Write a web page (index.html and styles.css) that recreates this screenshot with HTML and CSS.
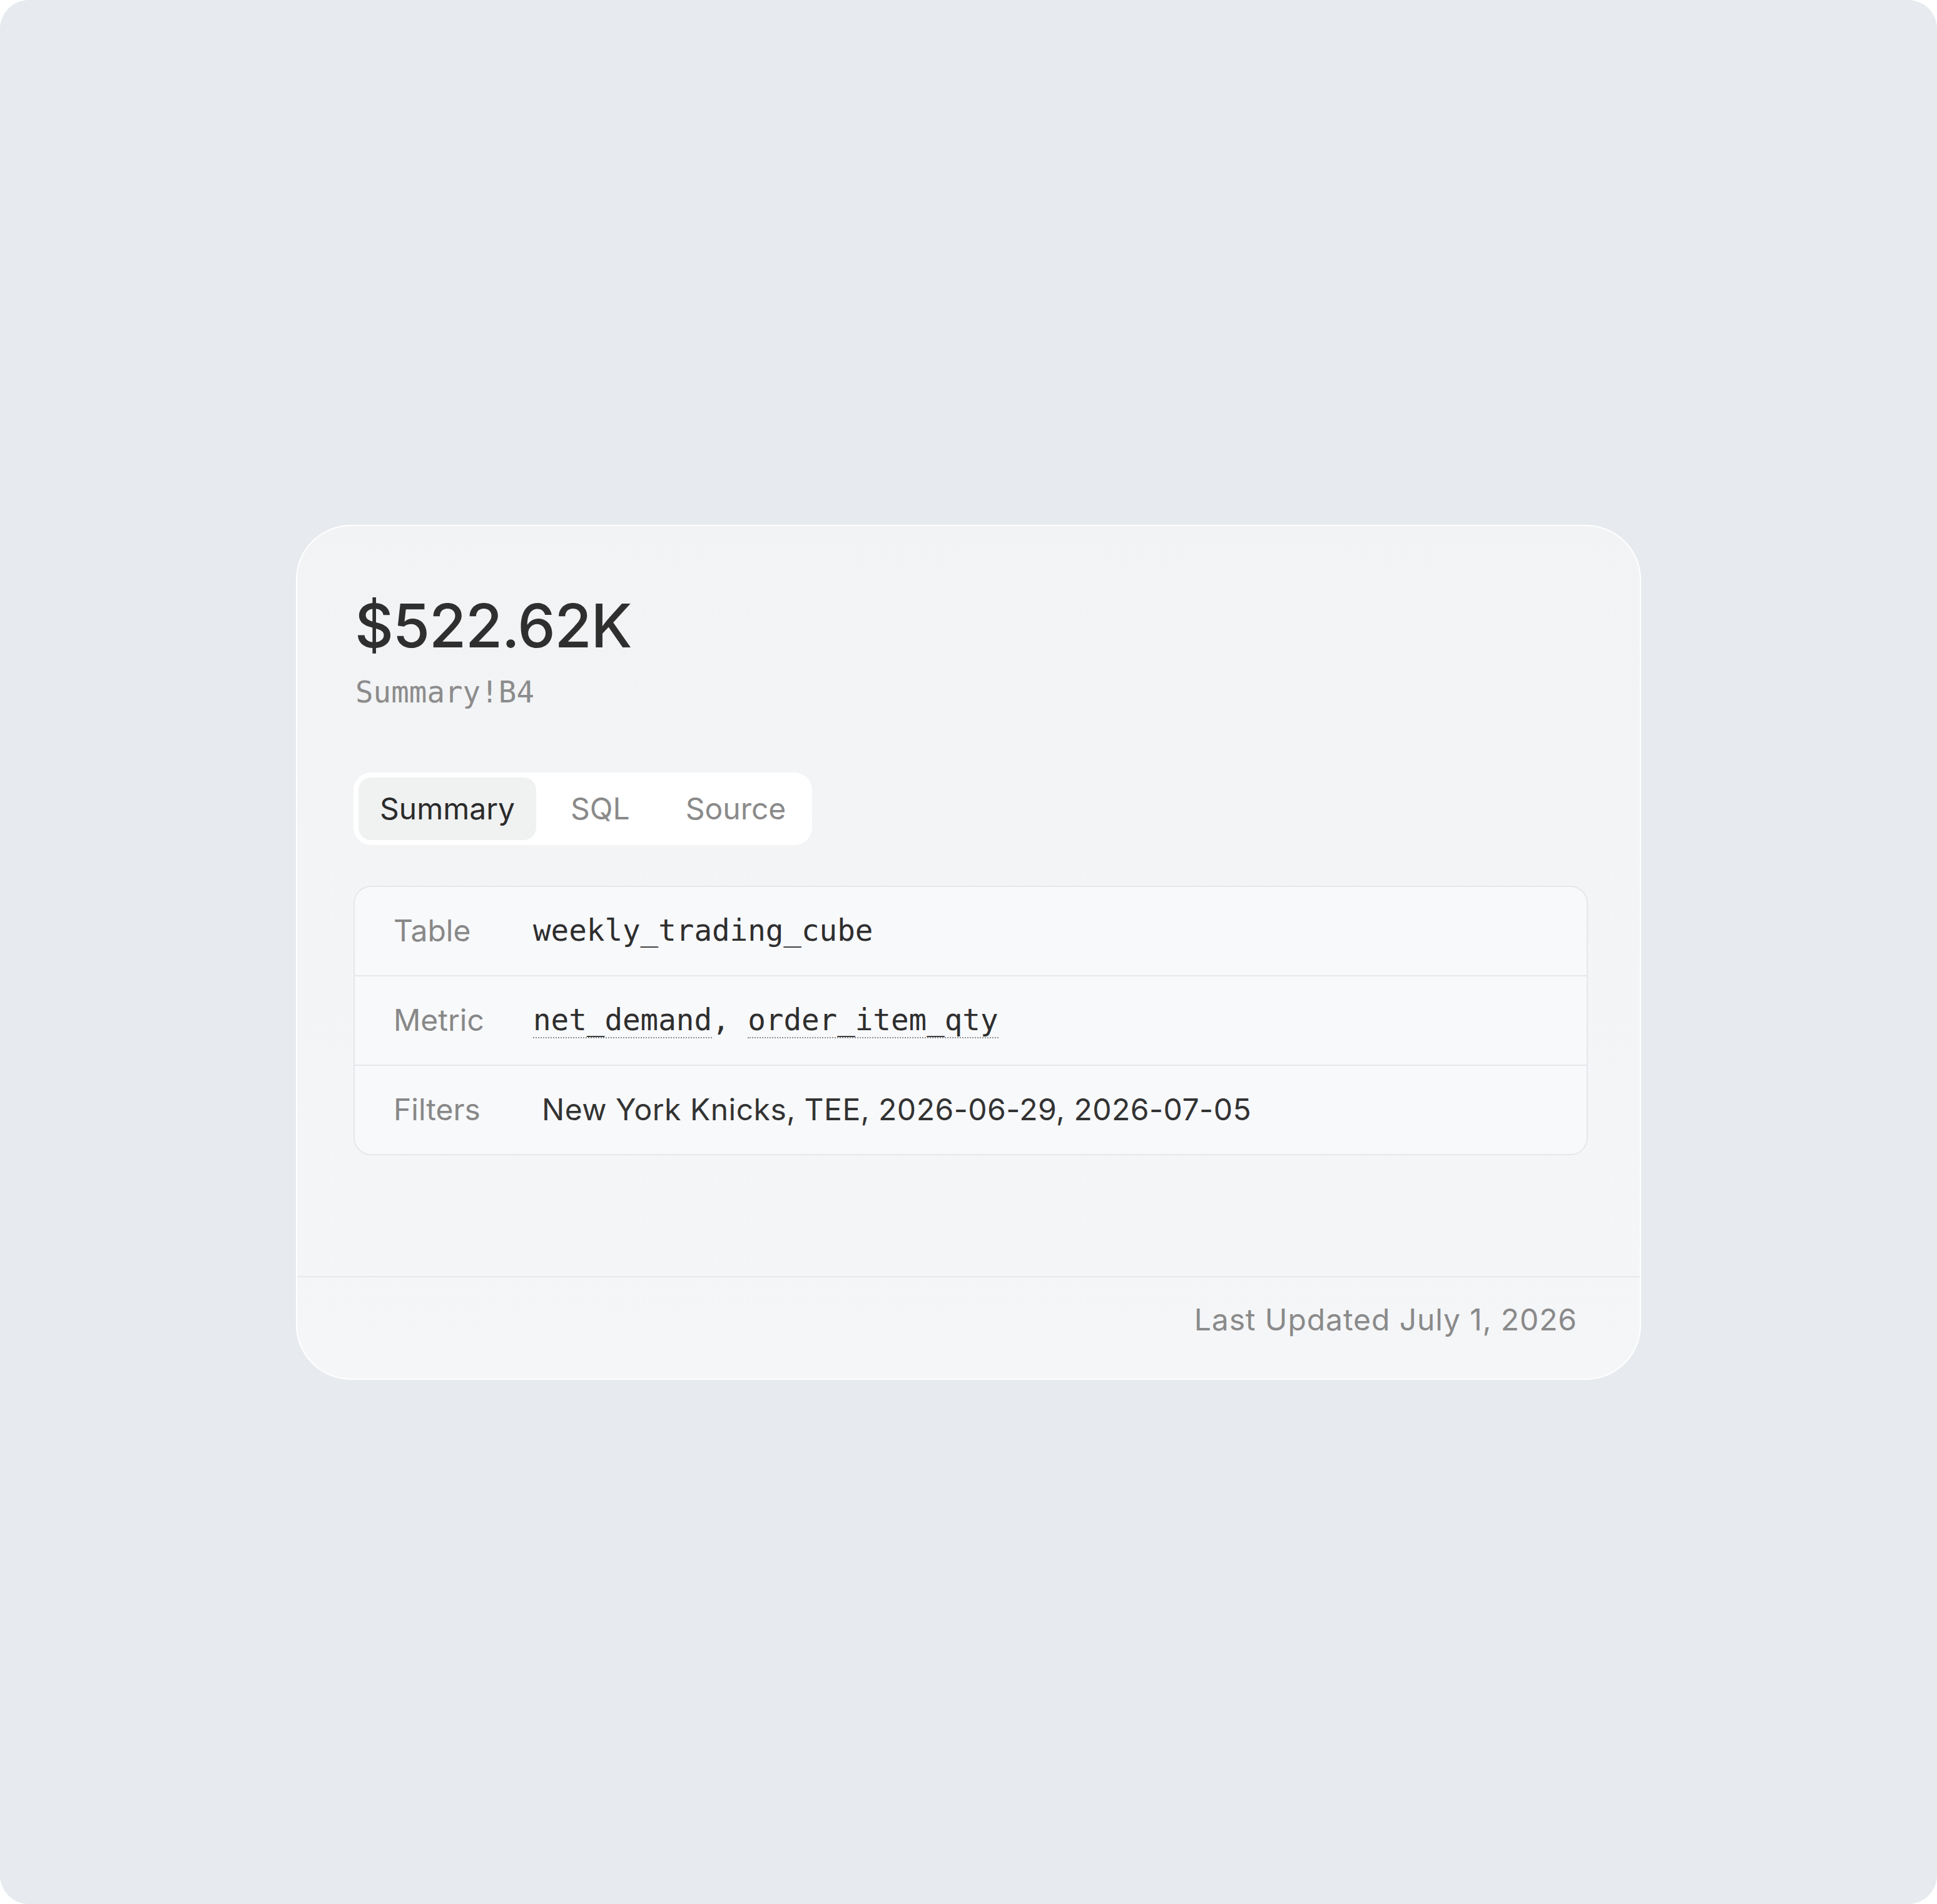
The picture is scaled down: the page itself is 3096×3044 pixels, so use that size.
FILE: index.html
```html
<!DOCTYPE html>
<html lang="en">
<head>
<meta charset="utf-8">
<title>Summary!B4</title>
<link rel="stylesheet" href="styles.css">
</head>
<body>
<div class="page">
  <div class="card">
    <div class="card-body">
      <div class="value">$522.62K</div>
      <div class="ref">Summary!B4</div>
      <div class="tabs">
        <div class="tab active">Summary</div>
        <div class="tab">SQL</div>
        <div class="tab">Source</div>
      </div>
      <div class="details">
        <div class="row">
          <div class="label">Table</div>
          <div class="val mono">weekly_trading_cube</div>
        </div>
        <div class="row">
          <div class="label">Metric</div>
          <div class="val mono"><span class="metric">net_demand</span>, <span class="metric">order_item_qty</span></div>
        </div>
        <div class="row">
          <div class="label">Filters</div>
          <div class="val filters">New York Knicks, TEE, 2026-06-29, 2026-07-05</div>
        </div>
      </div>
    </div>
    <div class="card-footer">Last Updated July 1, 2026</div>
  </div>
</div>
</body>
</html>
```
FILE: styles.css
```css
html, body {
  margin: 0;
  padding: 0;
  background: #ffffff;
}

body {
  font-family: "Inter", "Noto Sans", "Liberation Sans", sans-serif;
}

.page {
  width: 3096px;
  height: 3044px;
  border-radius: 46px;
  background: #e7eaee;
  display: flex;
  align-items: center;
  justify-content: center;
}

.card {
  box-sizing: border-box;
  width: 2150px;
  height: 1367px;
  border: 2px solid #ffffff;
  border-radius: 88px;
  background: linear-gradient(180deg, #f2f3f5 0%, #f5f6f8 100%);
  display: flex;
  flex-direction: column;
  overflow: hidden;
}

.card-body {
  flex: 1;
  padding: 101px 83px 0 90px;
}

.value {
  font-size: 96px;
  line-height: 116px;
  font-weight: 500;
  color: #2f2f2f;
  letter-spacing: -1.2px;
  padding-left: 2px;
}

.ref {
  margin-top: 21px;
  padding-left: 3px;
  font-family: "DejaVu Sans Mono", "Liberation Mono", monospace;
  font-size: 47.5px;
  line-height: 56px;
  color: #8c8c8c;
}

.tabs {
  margin-top: 100px;
  display: inline-flex;
  gap: 21px;
  padding: 8px;
  background: #ffffff;
  border-radius: 28px;
}

.tab {
  height: 100px;
  line-height: 100px;
  padding: 0 34px;
  font-size: 48px;
  color: #8a8a8a;
  border-radius: 20px;
}

.tab.active {
  background: #f0f1f1;
  color: #2b2b2b;
}

.details {
  margin-top: 65px;
  border: 2px solid #e6e7ea;
  border-radius: 28px;
  background: #f8f9fb;
}

.row {
  height: 141px;
  display: flex;
  align-items: center;
  padding-left: 62px;
  border-top: 2px solid #e6e7ea;
}

.row:first-child {
  border-top: none;
}

.label {
  flex: 0 0 223px;
  font-size: 48px;
  color: #888888;
  line-height: 58px;
}

.val {
  font-size: 48px;
  line-height: 58px;
  color: #2e2e2e;
}

.mono {
  font-family: "DejaVu Sans Mono", "Liberation Mono", monospace;
  font-size: 47.5px;
}

.metric {
  border-bottom: 2px dotted #8c8c8c;
}

.filters {
  padding-left: 14px;
  color: #333333;
  letter-spacing: 0.5px;
}

.card-footer {
  border-top: 2px solid #e6e8eb;
  padding: 39px 100px 65px 0;
  text-align: right;
  font-size: 48px;
  line-height: 58px;
  color: #8a8a8a;
  letter-spacing: 0.9px;
}
```
